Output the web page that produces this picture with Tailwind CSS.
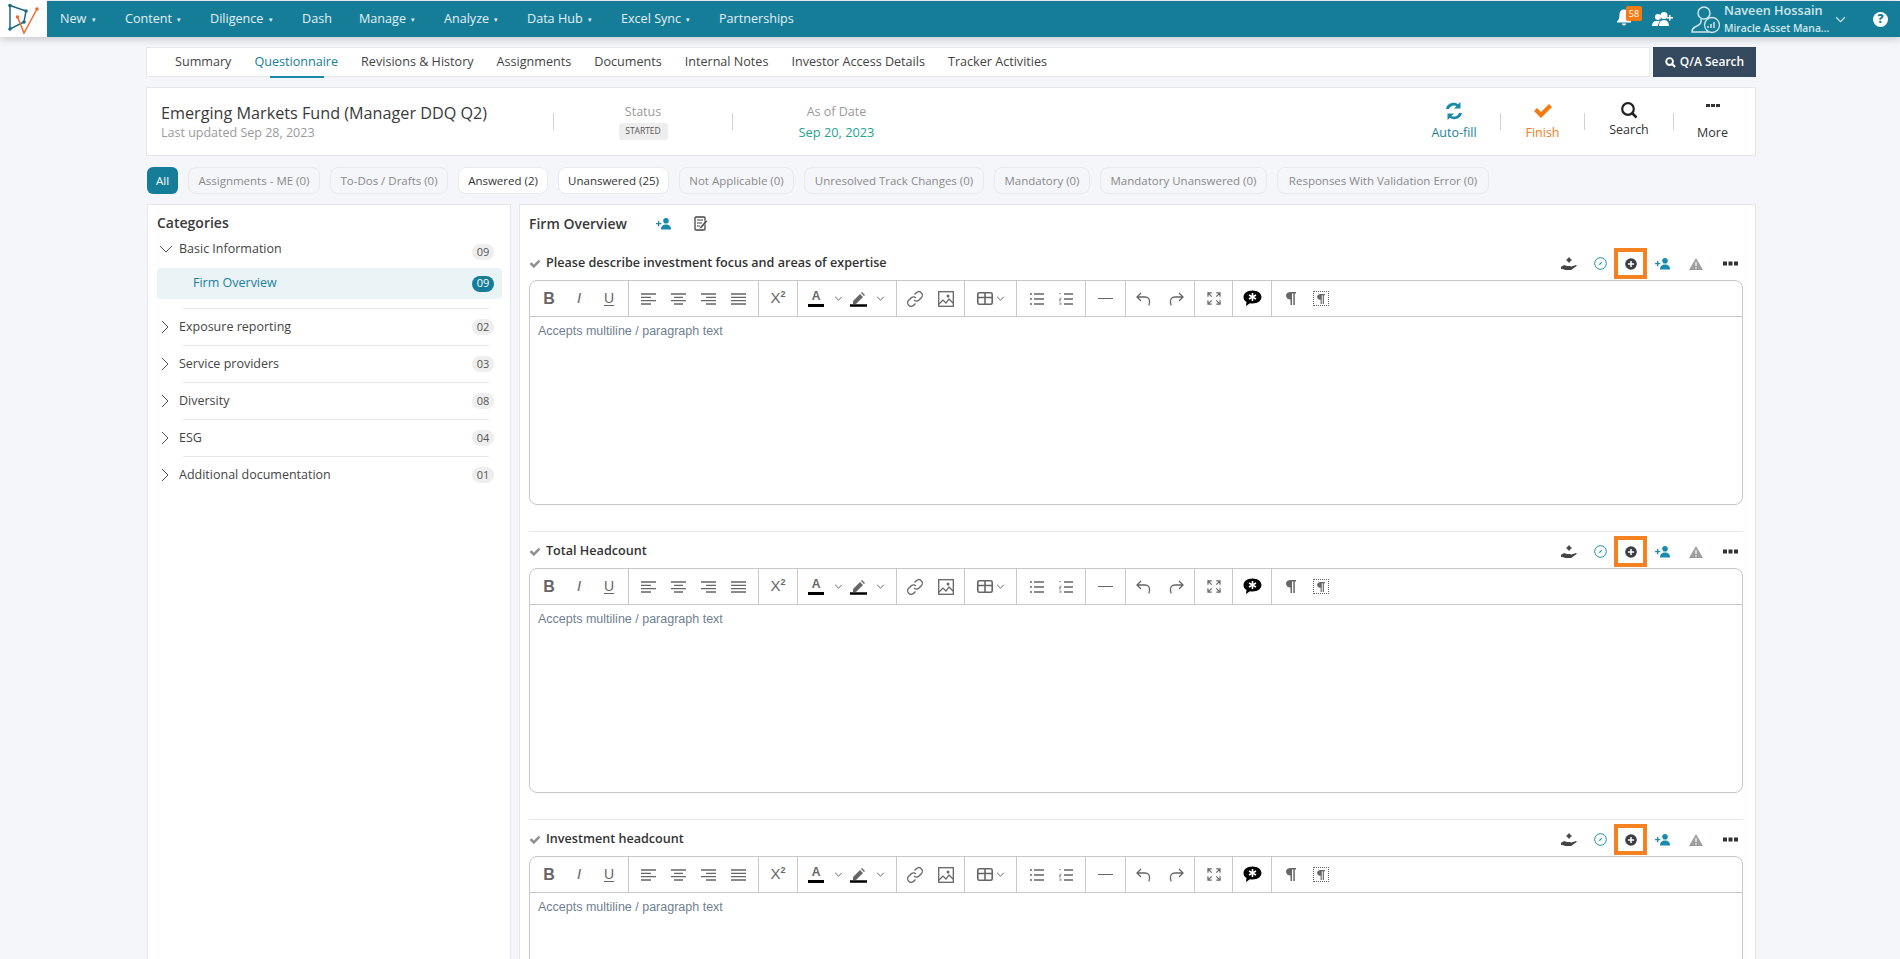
<!DOCTYPE html>
<html lang="en"><head><meta charset="utf-8"><title>Questionnaire</title>
<script src="https://cdn.jsdelivr.net/npm/@tailwindcss/browser@4"></script></head>
<body class="h-[959px] w-[1900px] overflow-hidden bg-[#f4f6fa] font-['Open_Sans',sans-serif] text-[#333]">
<svg class="hidden">
<symbol id="uplus" viewBox="0 0 16 12"><path fill="#1a8aaa" d="M10 0a2.8 2.8 0 1 1 0 5.600a2.800 2.800 0 0 1 0-5.600M5 11c0-3 2-4.500 5-4.500s5 1.500 5 4.500v.5H5zM0 5h2V3h1.300v2h2v1.300h-2v2H2v-2H0z"/></symbol>
<symbol id="chev" viewBox="0 0 10 6"><path d="M1 1l4 4 4-4" fill="none" stroke="#666" stroke-width="1.200"/></symbol>
<symbol id="pil" viewBox="0 0 10 13"><path fill="#666" d="M4.500 0H10v1.500H8.800V13H7.300V1.500H6V13H4.500V7.500C2 7.500 0 6 0 3.800S2 0 4.500 0z"/></symbol>
</svg>

<header class="mt-px flex h-[36px] items-center bg-[#167d99] shadow-[0_2px_8px_rgba(0,0,0,.2)] relative">
  <div class="-mt-px flex h-[37px] w-[47px] items-center justify-center bg-white">
    <svg width="47" height="37" viewBox="0 0 47 37"><path d="M10 5.500L26 11 24 22 10 29z" fill="none" stroke="#1d6a80" stroke-width="1.500"/><circle cx="10" cy="5.500" r="1.800" fill="#1d6a80"/><circle cx="26" cy="11" r="1.800" fill="#1d6a80"/><circle cx="24" cy="22" r="1.800" fill="#1d6a80"/><circle cx="10" cy="29" r="1.800" fill="#1d6a80"/><path d="M17.500 17L24 33 37 9" fill="none" stroke="#ef6a2c" stroke-width="1.500"/><circle cx="17.500" cy="17" r="1.800" fill="#ef6a2c"/><circle cx="37" cy="9" r="1.800" fill="#ef6a2c"/></svg>
  </div>
  <nav class="ml-[13px] flex text-[12.600px] font-medium text-[#e3f1f5]">
    <span class="w-[65px]">New <span class="ml-[2px] text-[7px] align-[1px]">▾</span></span>
    <span class="w-[85px]">Content <span class="ml-[2px] text-[7px] align-[1px]">▾</span></span>
    <span class="w-[92px]">Diligence <span class="ml-[2px] text-[7px] align-[1px]">▾</span></span>
    <span class="w-[57px]">Dash</span>
    <span class="w-[85px]">Manage <span class="ml-[2px] text-[7px] align-[1px]">▾</span></span>
    <span class="w-[83px]">Analyze <span class="ml-[2px] text-[7px] align-[1px]">▾</span></span>
    <span class="w-[94px]">Data Hub <span class="ml-[2px] text-[7px] align-[1px]">▾</span></span>
    <span class="w-[98px]">Excel Sync <span class="ml-[2px] text-[7px] align-[1px]">▾</span></span>
    <span>Partnerships</span>
  </nav>
  <div class="ml-auto flex items-center pr-[12px]">
    <div class="relative mr-[21px] h-[20px] w-[14px]">
      <svg class="absolute left-0 top-0" width="14" height="17" viewBox="0 0 14 16"><path fill="#fff" d="M7 0c3 0 4.500 2 4.500 5 0 4 1 5.500 2.500 7v1H0v-1c1.500-1.500 2.500-3 2.500-7C2.500 2 4 0 7 0M5 14h4a2 2 0 0 1-4 0"/></svg>
      <span class="absolute left-[9px] top-[-3px] flex h-[15px] w-[16px] items-center justify-center rounded-[2px] bg-[#f47b13] text-[9px] leading-none text-white">58</span>
    </div>
    <svg class="mr-[17px]" width="22" height="16" viewBox="0 0 22 16"><path fill="#fff" d="M6 3a3 3 0 1 1 0 6 3 3 0 0 1 0-6M12 1a3.500 3.500 0 1 1 0 7 3.500 3.500 0 0 1 0-7M0 15c0-3 1.500-5 4-5h4c-1 1-2 3-2 5zM7 15c0-3 1.500-6 5-6s5 3 5 6zM17 4h1.500v2H21v1.500h-2.500v2H17v-2h-2V6h2z"/></svg>
    <svg class="mr-[3px]" width="30" height="30" viewBox="0 0 30 30"><circle cx="13" cy="9" r="6" fill="none" stroke="#cfe6ec" stroke-width="1.500"/><path d="M10 15c1 3-1 6-6 8-2 1-3 3-3 5h17" fill="none" stroke="#cfe6ec" stroke-width="1.500"/><circle cx="21" cy="21" r="7.500" fill="#167d99" stroke="#cfe6ec" stroke-width="1.300"/><path d="M17 24v-2M20 24v-4M23 24v-6" stroke="#cfe6ec" stroke-width="1.500"/></svg>
    <div class="w-[111px] leading-none text-[#cfe6ec]">
      <div class="text-[12.700px] font-semibold leading-[18px]">Naveen Hossain</div>
      <div class="text-[10.300px] font-semibold leading-[18px]">Miracle Asset Mana...</div>
    </div>
    <svg class="mr-[27px]" width="11" height="7" viewBox="0 0 10 6"><path d="M1 1l4 4 4-4" fill="none" stroke="#cfe6ec" stroke-width="1.100"/></svg>
    <span class="flex h-[15px] w-[15px] items-center justify-center rounded-full bg-white text-[12px] font-extrabold leading-none text-[#167d99]">?</span>
  </div>
</header>

<main class="ml-[146px] w-[1610px]">
  <div class="mt-[10px] flex h-[30px] gap-[3px]">
    <div class="flex flex-1 items-center gap-[23px] border border-[#e6e8ee] bg-white pl-[28px] text-[12.600px] text-[#444]">
      <span>Summary</span>
      <span class="relative text-[#167d99]">Questionnaire<span class="absolute bottom-[-7px] left-[16px] h-[2px] w-[54px] bg-[#1a8aaa]"></span></span>
      <span>Revisions &amp; History</span><span>Assignments</span><span>Documents</span><span>Internal Notes</span><span>Investor Access Details</span><span>Tracker Activities</span>
    </div>
    <div class="flex w-[103px] items-center justify-center gap-[4px] bg-[#34495e] text-[12px] font-semibold text-white">
      <svg width="11" height="11" viewBox="0 0 12 12"><circle cx="5" cy="5" r="3.700" fill="none" stroke="#fff" stroke-width="2"/><path d="M8 8l3 3" stroke="#fff" stroke-width="2.200"/></svg>Q/A Search</div>
  </div>

  <section class="mt-[10px] flex h-[69px] items-center border border-[#e6e8ee] bg-white">
    <div class="w-[406px] pl-[14px]">
      <div class="text-[16.200px] leading-[22px] text-[#3a3a3a]">Emerging Markets Fund (Manager DDQ Q2)</div>
      <div class="text-[12.500px] leading-[18px] text-[#9a9a9a]">Last updated Sep 28, 2023</div>
    </div>
    <span class="h-[17px] w-px bg-[#cfd3d8]"></span>
    <div class="flex w-[178px] flex-col items-center">
      <span class="text-[12.500px] leading-[18px] text-[#9a9a9a]">Status</span>
      <span class="mt-[2px] flex h-[17px] w-[49px] items-center justify-center rounded-[3px] bg-[#eeeeee] text-[8.500px] text-[#555]">STARTED</span>
    </div>
    <span class="h-[17px] w-px bg-[#cfd3d8]"></span>
    <div class="flex w-[207px] flex-col items-center">
      <span class="text-[12.500px] leading-[18px] text-[#9a9a9a]">As of Date</span>
      <span class="mt-[2px] text-[12.800px] leading-[18px] text-[#1fa58f]">Sep 20, 2023</span>
    </div>
    <div class="ml-auto flex items-center pr-[4px]">
      <div class="flex w-[92px] flex-col items-center text-[12.500px] leading-[18px] text-[#1a7f9c]">
        <svg width="20" height="20" viewBox="0 0 20 20" class="mb-[3px]"><path fill="#1a8aaa" d="M16.500 1v6.500H10l2.500-2.500C10 3.500 6 4.800 5 8H2c1-5.500 7.500-8 12-4.700zM3.500 19v-6.500H10l-2.500 2.500c2.500 1.500 6.500.2 7.500-3h3c-1 5.500-7.500 8-12 4.700z"/></svg>Auto-fill</div>
      <span class="h-[17px] w-px bg-[#cfd3d8]"></span>
      <div class="flex w-[83px] flex-col items-center text-[12.500px] leading-[18px] text-[#f47b20]">
        <svg width="20" height="20" viewBox="0 0 20 20" class="mb-[3px]"><path fill="#f47b13" d="M1 10l3-3 4 4 8-8 3 3L8 17z"/></svg>Finish</div>
      <span class="h-[17px] w-px bg-[#cfd3d8]"></span>
      <div class="flex w-[88px] flex-col items-center pb-[4px] text-[12.500px] leading-[18px] text-[#333]">
        <svg width="18" height="18" viewBox="0 0 18 18" class="mb-[2px]"><circle cx="8" cy="8" r="5.800" fill="none" stroke="#222" stroke-width="2.200"/><path d="M12 12l4.500 4.500" stroke="#222" stroke-width="2.500"/></svg>Search</div>
      <span class="h-[17px] w-px bg-[#cfd3d8]"></span>
      <div class="flex w-[77px] flex-col items-center text-[12.500px] leading-[18px] text-[#333]">
        <svg width="16" height="20" viewBox="0 0 16 20" class="mb-[3px]"><path fill="#333" d="M1 3h4v3H1zM6 3h4v3H6zM11 3h4v3h-4z"/></svg>More</div>
    </div>
  </section>

  <div class="ml-px mt-[11px] flex h-[27px] gap-[10px] text-[11.500px] text-[#8a8a8a]">
    <span class="flex w-[31px] items-center justify-center rounded-[6px] bg-[#167d99] text-white">All</span>
    <span class="flex w-[132px] items-center justify-center rounded-[8px] border border-[#e8eaee] bg-[#f4f6fa]">Assignments - ME (0)</span>
    <span class="flex w-[118px] items-center justify-center rounded-[8px] border border-[#e8eaee]">To-Dos / Drafts (0)</span>
    <span class="flex w-[90px] items-center justify-center rounded-[8px] border border-[#e8eaee] bg-white text-[#333]">Answered (2)</span>
    <span class="flex w-[111px] items-center justify-center rounded-[8px] border border-[#e8eaee] bg-white text-[#333]">Unanswered (25)</span>
    <span class="flex w-[115px] items-center justify-center rounded-[8px] border border-[#e8eaee]">Not Applicable (0)</span>
    <span class="flex w-[180px] items-center justify-center rounded-[8px] border border-[#e8eaee]">Unresolved Track Changes (0)</span>
    <span class="flex w-[96px] items-center justify-center rounded-[8px] border border-[#e8eaee]">Mandatory (0)</span>
    <span class="flex w-[167px] items-center justify-center rounded-[8px] border border-[#e8eaee]">Mandatory Unanswered (0)</span>
    <span class="flex w-[212px] items-center justify-center rounded-[8px] border border-[#e8eaee]">Responses With Validation Error (0)</span>
  </div>

  <div class="mt-[10px] flex h-[755px] gap-[8px] overflow-hidden">
    <aside class="ml-px h-[775px] w-[364px] shrink-0 border border-[#e6e8ee] bg-white pl-[9px] pr-[8px] text-[12.500px] text-[#444]">
      <h2 class="pt-[8px] text-[14px] font-semibold leading-[20px] text-[#3a3a3a]">Categories</h2>
      <div class="mt-[3px] flex h-[26px] items-center pl-[2px] pr-[8px]">
        <svg width="14" height="8" viewBox="0 0 14 8"><path d="M1 1l6 6 6-6" fill="none" stroke="#555"/></svg>
        <span class="ml-[6px] flex-1">Basic Information</span>
        <span class="mt-[6px] flex h-[16px] w-[22px] items-center justify-center rounded-full bg-[#eeeeee] text-[11px] text-[#555]">09</span>
      </div>
      <div class="mt-[6px] flex h-[31px] items-center rounded-[4px] bg-[#eaf3f6] pl-[36px] pr-[8px] text-[#1a7f9c]">
        <span class="flex-1">Firm Overview</span>
        <span class="flex h-[16px] w-[22px] items-center justify-center rounded-full bg-[#167d99] text-[11px] text-white">09</span>
      </div>
      <div class="ml-[26px] mr-[13px] mt-[9px] h-px bg-[#e8e8e8]"></div>
      <div class="flex h-[36px] items-center pl-[4px] pr-[8px]"><svg width="8" height="14" viewBox="0 0 8 14"><path d="M1 1l6 6-6 6" fill="none" stroke="#555"/></svg><span class="ml-[10px] flex-1">Exposure reporting</span><span class="flex h-[16px] w-[22px] items-center justify-center rounded-full bg-[#eeeeee] text-[11px] text-[#555]">02</span></div>
      <div class="ml-[26px] mr-[13px] h-px bg-[#e8e8e8]"></div>
      <div class="flex h-[36px] items-center pl-[4px] pr-[8px]"><svg width="8" height="14" viewBox="0 0 8 14"><path d="M1 1l6 6-6 6" fill="none" stroke="#555"/></svg><span class="ml-[10px] flex-1">Service providers</span><span class="flex h-[16px] w-[22px] items-center justify-center rounded-full bg-[#eeeeee] text-[11px] text-[#555]">03</span></div>
      <div class="ml-[26px] mr-[13px] h-px bg-[#e8e8e8]"></div>
      <div class="flex h-[36px] items-center pl-[4px] pr-[8px]"><svg width="8" height="14" viewBox="0 0 8 14"><path d="M1 1l6 6-6 6" fill="none" stroke="#555"/></svg><span class="ml-[10px] flex-1">Diversity</span><span class="flex h-[16px] w-[22px] items-center justify-center rounded-full bg-[#eeeeee] text-[11px] text-[#555]">08</span></div>
      <div class="ml-[26px] mr-[13px] h-px bg-[#e8e8e8]"></div>
      <div class="flex h-[36px] items-center pl-[4px] pr-[8px]"><svg width="8" height="14" viewBox="0 0 8 14"><path d="M1 1l6 6-6 6" fill="none" stroke="#555"/></svg><span class="ml-[10px] flex-1">ESG</span><span class="flex h-[16px] w-[22px] items-center justify-center rounded-full bg-[#eeeeee] text-[11px] text-[#555]">04</span></div>
      <div class="ml-[26px] mr-[13px] h-px bg-[#e8e8e8]"></div>
      <div class="flex h-[36px] items-center pl-[4px] pr-[8px]"><svg width="8" height="14" viewBox="0 0 8 14"><path d="M1 1l6 6-6 6" fill="none" stroke="#555"/></svg><span class="ml-[10px] flex-1">Additional documentation</span><span class="flex h-[16px] w-[22px] items-center justify-center rounded-full bg-[#eeeeee] text-[11px] text-[#555]">01</span></div>
    </aside>

    <div id="qs" class="h-[1000px] flex-1 border border-[#e6e8ee] bg-white pl-[9px] pr-[12px]">
      <div class="flex h-[42px] items-center pb-[5px] text-[14px] font-semibold text-[#3a3a3a]">
        <span class="w-[127px]">Firm Overview</span>
        <svg width="16" height="12"><use href="#uplus"/></svg>
        <svg class="ml-[22px]" width="14" height="15" viewBox="0 0 14 15"><rect x="1" y="1" width="10" height="13" rx="1" fill="none" stroke="#444" stroke-width="1.300"/><path d="M3 4h6M3 7h5M3 10h3" stroke="#444"/><path d="M6 11l6-7 1.500 1.300-6 7-2 .5z" fill="#444" stroke="#fff" stroke-width=".5"/></svg>
      </div>

      <template id="q">
      <article class="h-[288px]">
        <div class="flex h-[33px] items-center">
          <svg width="12" height="10" viewBox="0 0 20 16"><path fill="#8d9499" d="M1 8l3-3 4 4 8-8 3 3L8 15z"/></svg>
          <h3 class="q-t ml-[5px] flex-1 text-[12.600px] font-semibold text-[#333]"></h3>
          <div class="flex items-center">
            <svg width="16" height="14" viewBox="0 0 16 14"><circle cx="8" cy="3" r="2" fill="#444"/><path d="M8 0v6M5 3h6" stroke="#444" stroke-width=".8"/><path fill="#444" d="M0 10c2-2 4-2 6-1h3c1 .5 1 1.500 0 1.500H7l5-1.500 3-1c1 0 1 1 0 1.500L10 13H4l-2-1H0z"/></svg>
            <svg class="ml-[17px]" width="13" height="13" viewBox="0 0 13 13"><circle cx="6.500" cy="6.500" r="5.800" fill="none" stroke="#1a8aaa"/><path d="M8.500 4.500L7 7 4.500 8.500 6 6z" fill="#1a8aaa"/></svg>
            <div class="ml-[7px] flex h-[31px] w-[33px] items-center justify-center border-[4px] border-[#f58220] bg-white">
              <svg width="12" height="12" viewBox="0 0 12 12"><circle cx="6" cy="6" r="5.800" fill="#3a3f44"/><path d="M6 3v6M3 6h6" stroke="#fff" stroke-width="1.500"/></svg>
            </div>
            <svg class="ml-[8px]" width="16" height="12"><use href="#uplus"/></svg>
            <svg class="ml-[18px]" width="14" height="12" viewBox="0 0 14 12"><path fill="#9a9fa4" d="M7 0l7 12H0z"/><path d="M7 4v4M7 9v1.500" stroke="#fff" stroke-width="1.200"/></svg>
            <svg class="ml-[20px] mr-[5px]" width="15" height="5" viewBox="0 0 15 5"><path fill="#333" d="M0 .5h4v4H0zM5.500 .5h4v4h-4zM11 .5h4v4h-4z"/></svg>
          </div>
        </div>
        <div class="h-[225px] rounded-[8px] border border-[#c8c8c8]">
          <div class="flex h-[36px] items-stretch border-b border-[#c8c8c8]">
            <div class="flex w-[99px] items-center justify-around border-r border-[#c8c8c8] px-[4px] font-['Liberation_Sans',sans-serif] text-[#666]">
              <span class="w-[30px] text-center text-[16px] font-bold">B</span><span class="w-[30px] text-center text-[15px] italic">I</span><span class="w-[30px] text-center text-[14px] underline underline-offset-2">U</span>
            </div>
            <div class="flex w-[130px] items-center justify-around border-r border-[#c8c8c8] px-[4px]">
              <svg width="15" height="12" viewBox="0 0 15 12"><path d="M0 1h15M0 4.300h10M0 7.600h15M0 11h10" stroke="#666" stroke-width="1.300"/></svg>
              <svg width="15" height="12" viewBox="0 0 15 12"><path d="M0 1h15M3 4.300h9M0 7.600h15M3 11h9" stroke="#666" stroke-width="1.300"/></svg>
              <svg width="15" height="12" viewBox="0 0 15 12"><path d="M0 1h15M5 4.300h10M0 7.600h15M5 11h10" stroke="#666" stroke-width="1.300"/></svg>
              <svg width="15" height="12" viewBox="0 0 15 12"><path d="M0 1h15M0 4.300h15M0 7.600h15M0 11h15" stroke="#666" stroke-width="1.300"/></svg>
            </div>
            <div class="flex w-[39px] items-center justify-center border-r border-[#c8c8c8] font-['Liberation_Sans',sans-serif] text-[15px] text-[#666]">X<sup class="text-[9px] font-bold">2</sup></div>
            <div class="flex w-[99px] items-center border-r border-[#c8c8c8] pl-[4px]">
              <div class="flex w-[28px] flex-col items-center font-['Liberation_Sans',sans-serif] text-[12px] font-bold leading-[12px] text-[#666]">A<span class="mt-[2px] h-[2.500px] w-[16px] bg-black"></span></div>
              <svg class="ml-[4px] mr-[5px]" width="9" height="5"><use href="#chev"/></svg>
              <svg class="ml-[2px]" width="17" height="16" viewBox="0 0 17 16"><path fill="#666" d="M3 10l7-7 3 3-7 7H3zM11 2l1-1 3 3-1 1z"/><path d="M0 14.500h17" stroke="#000" stroke-width="2.500"/></svg>
              <svg class="ml-[9px]" width="9" height="5"><use href="#chev"/></svg>
            </div>
            <div class="flex w-[68px] items-center justify-around border-r border-[#c8c8c8] px-[3px]">
              <svg width="16" height="16" viewBox="0 0 16 16"><g fill="none" stroke="#666" stroke-width="1.300"><path d="M7.500 3.500l1.800-1.800a3 3 0 0 1 5 5L12 9c-1.500 1.500-3.500 1.500-4.800 0"/><path d="M8.500 12.500l-1.800 1.800a3 3 0 0 1-5-5L4 7c1.500-1.500 3.500-1.500 4.800 0"/></g></svg>
              <svg width="16" height="16" viewBox="0 0 16 16"><rect x=".7" y=".7" width="14.600" height="14.600" fill="none" stroke="#666" stroke-width="1.300"/><path d="M1 13l4-4 3 3 3-4 4 4" fill="none" stroke="#666" stroke-width="1.200"/><circle cx="10" cy="5" r="1.500" fill="#666"/></svg>
            </div>
            <div class="flex w-[52px] items-center justify-center gap-[3px] border-r border-[#c8c8c8]">
              <svg width="16" height="13" viewBox="0 0 16 13"><rect x=".8" y=".8" width="14.400" height="11.400" rx="1.500" fill="none" stroke="#666" stroke-width="1.600"/><path d="M.7 5.500h14.600M8 1v11.500" stroke="#666" stroke-width="1.600"/></svg>
              <svg width="9" height="5"><use href="#chev"/></svg>
            </div>
            <div class="flex w-[69px] items-center justify-around border-r border-[#c8c8c8] px-[5px]">
              <svg width="14" height="12" viewBox="0 0 14 12"><path d="M4 1h10M4 6h10M4 11h10" stroke="#666" stroke-width="1.300"/><circle cx="1" cy="1" r="1" fill="#666"/><circle cx="1" cy="6" r="1" fill="#666"/><circle cx="1" cy="11" r="1" fill="#666"/></svg>
              <svg width="14" height="12" viewBox="0 0 14 12"><path d="M5 1h9M5 6h9M5 11h9" stroke="#666" stroke-width="1.300"/><path d="M0 .5h2M.5 5h1.500v1.500H.500v1.500H2M0 10h2v2H0" stroke="#666" stroke-width=".6" fill="none"/></svg>
            </div>
            <div class="flex w-[40px] items-center justify-center border-r border-[#c8c8c8]"><span class="h-[1.500px] w-[15px] bg-[#666]"></span></div>
            <div class="flex w-[69px] items-center justify-around border-r border-[#c8c8c8] px-[1px]">
              <svg width="15" height="14" viewBox="0 0 15 14"><path d="M5 1L1 5l4 4M1 5h8c3 0 5 2 4.500 5.500l-.5 3" fill="none" stroke="#666" stroke-width="1.300"/></svg>
              <svg width="15" height="14" viewBox="0 0 15 14"><path d="M10 1l4 4-4 4M14 5H6C3 5 1 7 1.500 10.500l.5 3" fill="none" stroke="#666" stroke-width="1.300"/></svg>
            </div>
            <div class="flex w-[38px] items-center justify-center border-r border-[#c8c8c8]">
              <svg width="14" height="13" viewBox="0 0 15 14" fill="none" stroke="#666" stroke-width="1.300"><path d="M1 5V1h4M1 1l4 4M14 5V1h-4M14 1l-4 4M1 9v4h4M1 13l4-4M14 9v4h-4M14 13l-4-4"/></svg>
            </div>
            <div class="flex w-[39px] items-center justify-center border-r border-[#c8c8c8]">
              <svg width="19" height="17" viewBox="0 0 19 17"><path d="M9.500.5c5 0 9 2.800 9 6.500s-4 6.500-9 6.500c-1 0-1.800-.1-2.600-.3L3 16l.5-4C1.500 11 .5 9.200.5 7 .5 3.300 4.500.5 9.500.5z" fill="#000"/><path d="M9.500 3v8M6 5l7 4M13 5L6 9" stroke="#fff" stroke-width="1.600"/></svg>
            </div>
            <div class="flex items-center pl-[14px]">
              <svg width="10" height="13"><use href="#pil"/></svg>
              <span class="ml-[17px] flex h-[15px] w-[16px] items-center justify-center border border-dotted border-[#666]"><svg width="8" height="10"><use href="#pil"/></svg></span>
            </div>
          </div>
          <p class="pl-[8px] pt-[7px] font-['Liberation_Sans',sans-serif] text-[12.500px] leading-[14px] text-[#6f7f90]">Accepts multiline / paragraph text</p>
        </div>
        <div class="mt-[26px] h-px bg-[#e6e6e6]"></div>
      </article>
      </template>
    </div>
  </div>
</main>
<script>
const t=document.getElementById('q'),h=document.getElementById('qs');
['Please describe investment focus and areas of expertise','Total Headcount','Investment headcount'].forEach(s=>{const c=t.content.cloneNode(true);c.querySelector('.q-t').textContent=s;h.appendChild(c);});
</script>
</body></html>
